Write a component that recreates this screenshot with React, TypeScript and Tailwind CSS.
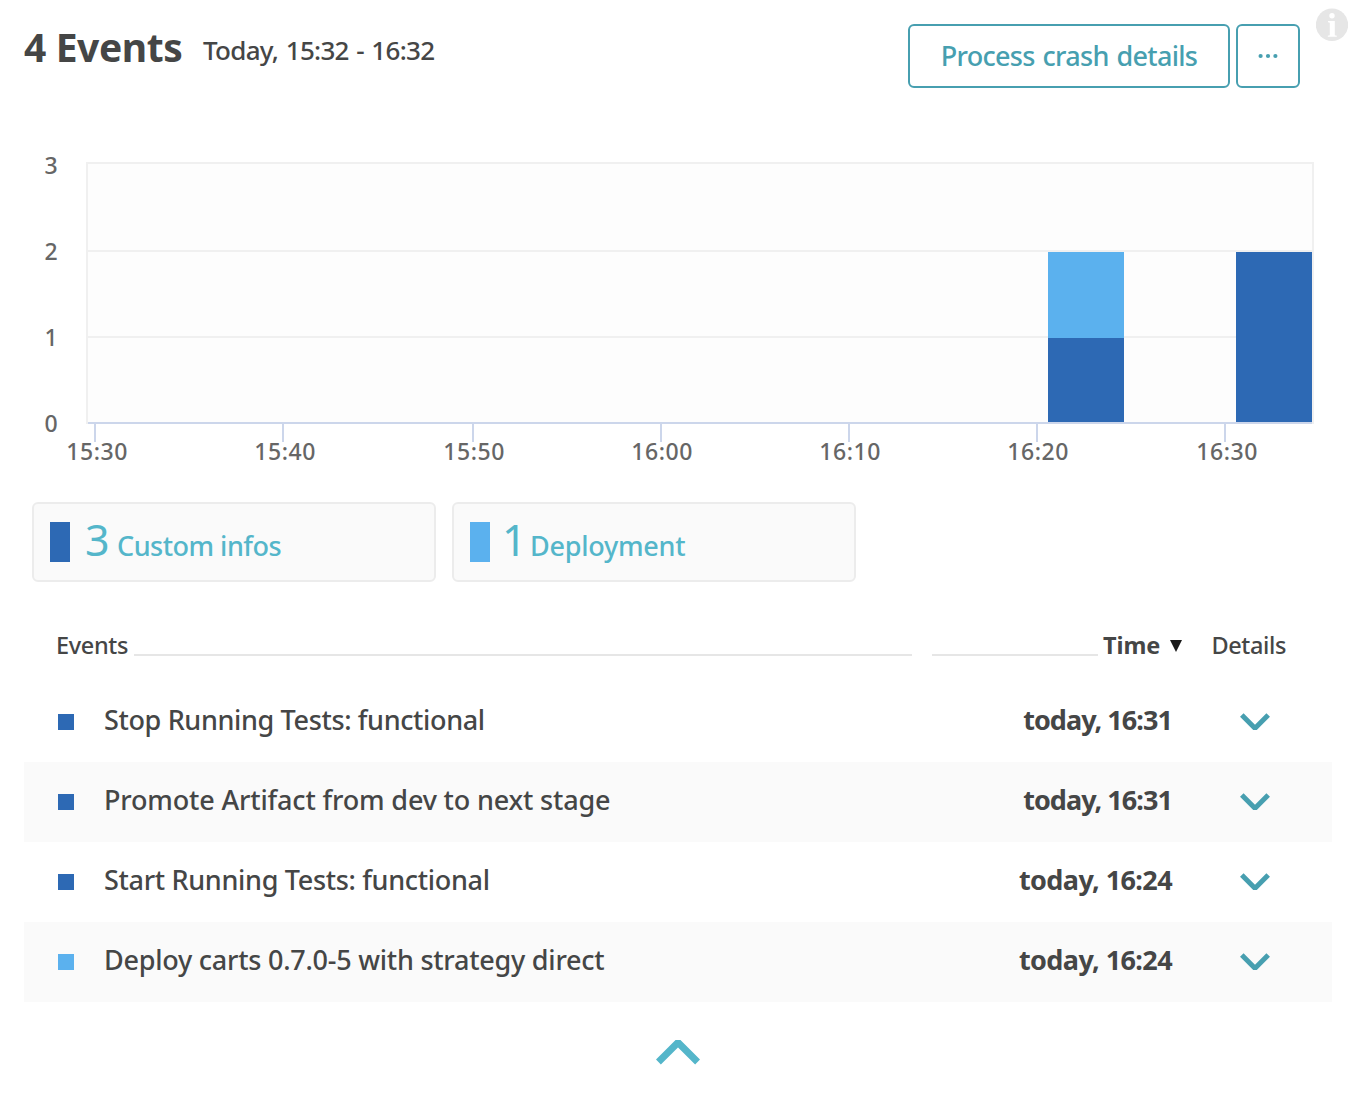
const EVENTS = [
  { name: 'Stop Running Tests: functional', time: 'today, 16:31', color: 'bg-[#2d69b4]', tracking: 'tracking-[-0.36px]', timeTracking: 'tracking-[-0.95px]' },
  { name: 'Promote Artifact from dev to next stage', time: 'today, 16:31', color: 'bg-[#2d69b4]', tracking: 'tracking-[-0.16px]', timeTracking: 'tracking-[-0.95px]' },
  { name: 'Start Running Tests: functional', time: 'today, 16:24', color: 'bg-[#2d69b4]', tracking: 'tracking-[-0.32px]', timeTracking: 'tracking-[-0.6px]' },
  { name: 'Deploy carts 0.7.0-5 with strategy direct', time: 'today, 16:24', color: 'bg-[#5bb1ee]', tracking: 'tracking-[-0.24px]', timeTracking: 'tracking-[-0.6px]' },
];

const TICKS = [
  { x: 95, label: '15:30' },
  { x: 283, label: '15:40' },
  { x: 472, label: '15:50' },
  { x: 660, label: '16:00' },
  { x: 848, label: '16:10' },
  { x: 1036, label: '16:20' },
  { x: 1225, label: '16:30' },
];

const LEVELS = [
  { y: 26, label: '3' },
  { y: 112, label: '2' },
  { y: 198, label: '1' },
  { y: 284, label: '0' },
];

function Header() {
  return (
    <header className="flex h-[148px] items-start pl-6">
      <h1 className="mt-5 w-[160px] text-[39px] leading-[54px] font-bold tracking-[-0.4px]">4 Events</h1>
      <p className="mt-[30px] ml-[19px] text-[26px] leading-10 font-medium tracking-[-0.7px] [word-spacing:1.4px]">Today, 15:32 - 16:32</p>
      <div className="mt-6 ml-auto flex gap-1.5 text-[#479fb0]">
        <button className="h-16 w-[322px] rounded-md border-2 border-[#479fb0] text-[27px] leading-10 font-medium tracking-[-0.7px] [word-spacing:1.5px]">
          Process crash details
        </button>
        <button aria-label="More actions" className="flex h-16 w-16 items-center justify-center rounded-md border-2 border-[#479fb0]">
          <svg width="20" height="6" viewBox="0 0 20 6" fill="currentColor">
            <circle cx="2.6" cy="3" r="2.1" />
            <circle cx="10" cy="3" r="2.1" />
            <circle cx="17.4" cy="3" r="2.1" />
          </svg>
        </button>
      </div>
      <svg className="mt-2 mr-2 ml-4" width="32" height="34" viewBox="0 0 32 34">
        <circle cx="16" cy="16.8" r="16.2" fill="#e6e6e6" />
        <circle cx="16" cy="7.7" r="2.7" fill="#fff" />
        <path d="M12 13h6.8v14.2l2 .6v1h-9v-1l2-.6V14.7l-1.8-.5z" fill="#fff" />
      </svg>
    </header>
  );
}

function Chart() {
  return (
    <svg className="block" width="1356" height="330" viewBox="0 0 1356 330" shapeRendering="crispEdges">
      <rect x="87" y="15" width="1226" height="260" fill="#fdfdfd" stroke="#f0f0f0" strokeWidth="2" />
      <path d="M88 103H1312M88 189H1312" stroke="#f0f0f0" strokeWidth="2" />
      <rect x="1048" y="104" width="76" height="86" fill="#5bb1ee" />
      <rect x="1048" y="190" width="76" height="84" fill="#2d69b4" />
      <rect x="1236" y="104" width="76" height="170" fill="#2d69b4" />
      <path d="M88 275H1312" stroke="#ccd6eb" strokeWidth="2" />
      <path d="M95 276v18M283 276v18M473 276v18M661 276v18M849 276v18M1037 276v18M1225 276v18" stroke="#ccd6eb" strokeWidth="2" />
      <g className="text-[23px] font-medium" fill="#666">
        {LEVELS.map((l) => (
          <text key={l.label} x="51" y={l.y} textAnchor="middle">{l.label}</text>
        ))}
      </g>
      {TICKS.map((t) => (
        <text key={t.label} className="text-[23px] font-medium tracking-[0.6px]" x={t.x + 2.2} y="312" textAnchor="middle" fill="#666">{t.label}</text>
      ))}
    </svg>
  );
}

function Legend() {
  return (
    <div className="mt-6 flex gap-4 pl-8 text-[#54b6ca]">
      <div className="flex h-20 w-[404px] rounded-md border-2 border-[#ececec] bg-[#fafafa] pt-[18px] pl-4">
        <span className="h-10 w-5 bg-[#2d69b4]" />
        <div className="-mt-2.5 ml-[15px] flex h-14 items-baseline leading-[56px]">
          <span className="w-8 text-[43px] tracking-[-2px]">3</span>
          <span className="text-[27px] font-medium tracking-[-0.5px]">Custom infos</span>
        </div>
      </div>
      <div className="flex h-20 w-[404px] rounded-md border-2 border-[#ececec] bg-[#fafafa] pt-[18px] pl-4">
        <span className="h-10 w-5 bg-[#5bb1ee]" />
        <div className="-mt-2.5 ml-3 flex h-14 items-baseline leading-[56px]">
          <span className="w-7 text-[43px]">1</span>
          <span className="text-[27px] font-medium tracking-[-0.25px]">Deployment</span>
        </div>
      </div>
    </div>
  );
}

function EventTable() {
  return (
    <section className="mt-[46px] px-6">
      <div className="flex h-[54px] items-start pl-8 text-[23.5px] leading-[34px] font-medium">
        <span className="w-[78px] tracking-[-0.35px]">Events</span>
        <span className="mt-[26px] h-0.5 w-[778px] bg-[#e6e6e6]" />
        <span className="mt-[26px] ml-5 h-0.5 w-[166px] bg-[#e6e6e6]" />
        <span className="ml-[5px] w-[67px] font-bold tracking-[-0.1px]">Time</span>
        <svg className="mt-3" width="12" height="12" viewBox="0 0 12 12" fill="#191919">
          <path d="M0 0h12L6 12z" />
        </svg>
        <span className="ml-[29.5px] tracking-[-0.4px]">Details</span>
      </div>
      {EVENTS.map((e) => (
        <div key={e.name} className="flex h-20 items-center pr-[62px] pl-[34px] text-[27px] leading-10 font-medium even:bg-white odd:bg-[#fafafa]">
          <span className={`size-4 ${e.color}`} />
          <span className={`ml-[30px] pb-1 ${e.tracking}`}>{e.name}</span>
          <span className={`ml-auto pb-1 font-bold ${e.timeTracking}`}>{e.time}</span>
          <svg className="ml-[68px]" width="30" height="18" viewBox="0 0 30 18" fill="none" stroke="#479fb0" strokeWidth="5" strokeLinejoin="bevel">
            <path d="M1.8 2 15 15.2 28.2 2" />
          </svg>
        </div>
      ))}
    </section>
  );
}

export default function App() {
  return (
    <main className="h-[1098px] w-[1356px] overflow-hidden bg-white font-['Noto_Sans',sans-serif] text-[#454646]">
      <Header />
      <Chart />
      <Legend />
      <EventTable />
      <svg className="mx-auto mt-9" width="44" height="28" viewBox="0 0 44 28" fill="none" stroke="#54b6ca" strokeWidth="7" strokeLinejoin="bevel">
        <path d="M2.4 24 22 4.6l19.6 19.4" />
      </svg>
    </main>
  );
}
